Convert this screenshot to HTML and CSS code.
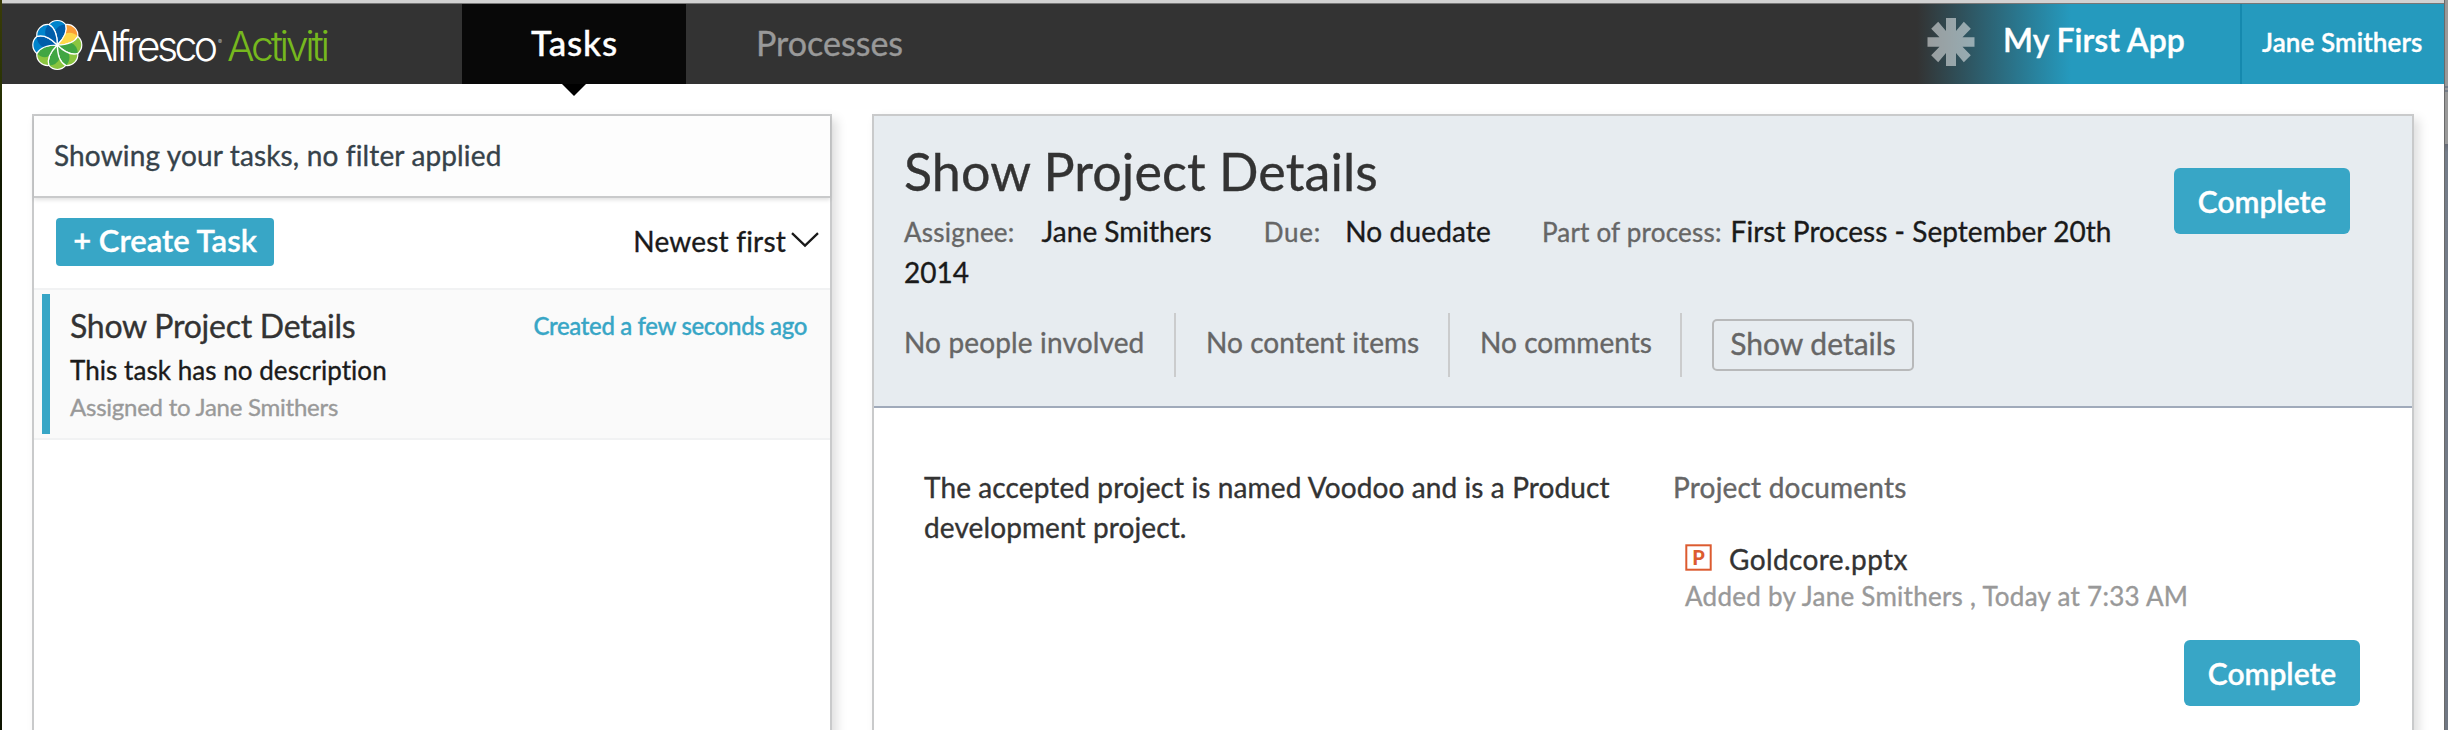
FILE: index.html
```html
<!DOCTYPE html>
<html lang="en">
<head>
<meta charset="utf-8">
<title>Alfresco Activiti - Tasks</title>
<link rel="stylesheet" href="styles.css">
</head>
<body>
<div class="frame">
  <div class="edge-left"></div>
  <div class="window">
    <div class="titlebar"></div>
    <header class="header">
      <svg class="logo" width="430" height="80" viewBox="0 0 430 80" role="img" aria-label="Alfresco Activiti">
        <defs>
          <path id="petal" d="M0 0C0 -8.5 -2.5 -17.3 -8.49 -20.49A11 11 0 0 1 8.49 -20.49C10.5 -14 6 -6 0 0Z"/>
          <path id="shade" d="M0 0A12 12 0 0 1 8.49 -20.49C10.5 -14 6 -6 0 0Z"/>
          <clipPath id="petal-clip"><use href="#petal"/></clipPath>
        </defs>
        <g transform="translate(25.3 41)" stroke-width="1.2">
          <g fill="#0084cc"><use href="#petal"/><use href="#shade" fill="#005daa" clip-path="url(#petal-clip)"/><use href="#petal" class="vein"/></g>
          <g fill="#fa9d35" transform="rotate(45)"><use href="#petal"/><use href="#shade" fill="#fed84a" clip-path="url(#petal-clip)"/><use href="#petal" class="vein"/></g>
          <g fill="#8bc53f" transform="rotate(90)"><use href="#petal"/><use href="#shade" fill="#41a643" clip-path="url(#petal-clip)"/><use href="#petal" class="vein"/></g>
          <g fill="#8bc53f" transform="rotate(135)"><use href="#petal"/><use href="#shade" fill="#41a643" clip-path="url(#petal-clip)"/><use href="#petal" class="vein"/></g>
          <g fill="#8bc53f" transform="rotate(180)"><use href="#petal"/><use href="#shade" fill="#41a643" clip-path="url(#petal-clip)"/><use href="#petal" class="vein"/></g>
          <g fill="#8bc53f" transform="rotate(225)"><use href="#petal"/><use href="#shade" fill="#41a643" clip-path="url(#petal-clip)"/><use href="#petal" class="vein"/></g>
          <g fill="#0084cc" transform="rotate(270)"><use href="#petal"/><use href="#shade" fill="#005daa" clip-path="url(#petal-clip)"/><use href="#petal" class="vein"/></g>
          <g fill="#0084cc" transform="rotate(315)"><use href="#petal"/><use href="#shade" fill="#005daa" clip-path="url(#petal-clip)"/><use href="#petal" class="vein"/></g>
        </g>
        <text class="logo-text" x="54" y="57" textLength="132" fill="#fff">Alfresco</text>
        <text class="logo-reg" x="186" y="40" fill="#bbb">®</text>
        <text class="logo-text" x="195" y="57" textLength="103" fill="#76b81e">Activiti</text>
      </svg>
      <nav class="nav">
        <a class="tab tab-active">Tasks</a>
        <a class="tab tab-processes">Processes</a>
      </nav>
      <div class="app">
        <svg width="48" height="48" viewBox="-24 -24 48 48" fill="#fff" opacity=".5">
          <path d="M-5-24H5V-11L12.8-20.2L19.8-13.2L11.5-4.7H23.5V4.7H11.5L19.8 13.2L12.8 20.2L5 11V24H-5V11L-12.8 20.2L-19.8 13.2L-11.5 4.7H-23.5V-4.7H-11.5L-19.8-13.2L-12.8-20.2L-5-11Z"/>
        </svg>
        <span class="app-name">My First App</span>
      </div>
      <div class="user">Jane Smithers</div>
    </header>

    <main class="content">
      <section class="panel task-list">
        <div class="filter">Showing your tasks, no filter applied</div>
        <div class="toolbar">
          <button class="btn btn-create">+ Create Task</button>
          <div class="sort">Newest first
            <svg width="28" height="16" viewBox="0 0 28 16" fill="none" stroke="#1a1a1a" stroke-width="2.3"><path d="M1 1.2L14 13.6L27 1.2"/></svg>
          </div>
        </div>
        <article class="task">
          <div class="task-bar"></div>
          <div class="task-text">
            <div class="task-head"><span class="task-title">Show Project Details</span><span class="task-created">Created a few seconds ago</span></div>
            <div class="task-desc">This task has no description</div>
            <div class="task-assigned">Assigned to Jane Smithers</div>
          </div>
        </article>
      </section>

      <section class="panel detail">
        <div class="detail-head">
          <div class="detail-info">
            <h1 class="detail-title">Show Project Details</h1>
            <div class="meta"><span class="label assignee">Assignee:</span><span class="assignee-name">Jane Smithers</span><span class="label due">Due:</span><span class="due-value">No duedate</span><span class="label process">Part of process:</span><span class="process-name">First Process - September 20th 2014</span></div>
            <div class="stats">
              <span class="stat stat-people">No people involved</span>
              <span class="stat stat-content">No content items</span>
              <span class="stat stat-comments">No comments</span>
              <button class="btn-details">Show details</button>
            </div>
          </div>
          <button class="btn btn-complete">Complete</button>
        </div>
        <div class="form">
          <p class="form-text">The accepted project is named Voodoo and is a Product development project.</p>
          <div class="docs">
            <div class="docs-label">Project documents</div>
            <div class="doc">
              <div class="doc-name">
                <svg width="27" height="27" viewBox="0 0 27 27"><rect x="1.3" y="1.3" width="24.4" height="24.4" fill="#fff" stroke="#dc5b30" stroke-width="2"/><text class="doc-letter" x="13.5" y="20.6" text-anchor="middle">P</text></svg>
                <span>Goldcore.pptx</span>
              </div>
              <div class="doc-meta">Added by Jane Smithers , Today at 7:33 AM</div>
            </div>
          </div>
        </div>
        <div class="actions"><button class="btn btn-complete">Complete</button></div>
      </section>
    </main>
  </div>
  <div class="edge-right"></div>
</div>
</body>
</html>
```
FILE: styles.css
```css
* { box-sizing: border-box; }
body { margin: 0; font-family: Lato, "Open Sans", sans-serif; font-size: 28px; line-height: 40px; color: #1a1a1a; background: #fff; -webkit-text-stroke: .35px; }
button { font-family: inherit; margin: 0; }

.frame { display: grid; grid-template-columns: 2px 1fr 4px; height: 730px; overflow: hidden; }
.edge-left { background: linear-gradient(#3a3c08, #2a3404 84px, #101800 180px, #161f02 320px, #0c1200); }
.edge-right { border-left: 1px solid #6a6a6a; background: linear-gradient(#999 86px, #757d89 86px, #757d89 88px, #999 88px, #999 90px, #757d89 90px, #757d89 92px, #999 92px, #999 144px, #666b75 144px, #757d89 152px, #6f7682); }
.window { min-width: 0; display: flex; flex-direction: column; }
.titlebar { height: 4px; flex: none; background: #d2d2d2; border-bottom: 1px solid #777; }

.header { display: flex; height: 80px; flex: none; padding-left: 30px; background: #333; }
.logo { flex: none; display: block; -webkit-text-stroke: 0; }
.logo-text { font-family: Inter, "Liberation Sans", sans-serif; font-weight: 300; font-size: 41px; }
.logo-reg { font-family: Inter, sans-serif; font-size: 6px; }
.vein { fill: none; stroke: #fff; }
.nav { display: flex; }
.tab { position: relative; height: 80px; line-height: 77px; font-size: 34px; text-align: center; color: #999; }
.tab-active { width: 224px; background: #080808; color: #fff; font-size: 35px; letter-spacing: .85px; font-weight: 500; padding-left: 1px; }
.tab-active::after { content: ""; position: absolute; left: 100px; top: 80px; border: 12px solid transparent; border-top-color: #000; border-bottom: 0; }
.tab-processes { padding-left: 70px; letter-spacing: 0; }
.app { display: flex; margin-left: auto; width: 331px; padding: 14px 0 0 18px; background: linear-gradient(90deg, #333 8px, #259abe 162px); }
.app-name { margin-left: 28px; margin-top: -14px; line-height: 71px; font-size: 32px; font-weight: 600; color: #fff; white-space: nowrap; }
.user { width: 204px; border-left: 2px solid #1589ae; background: #259abe; padding-left: 20px; line-height: 76px; font-size: 26px; letter-spacing: .1px; font-weight: 600; color: #fff; white-space: nowrap; }

.content { flex: 1; min-height: 0; display: grid; grid-template-columns: 800px 1542px; gap: 40px; padding: 30px 0 0 30px; }
.panel { height: 700px; border: 2px solid #c9cacb; background: #fff; box-shadow: 5px 5px 10px rgba(0, 0, 0, .13); }

.filter { height: 82px; line-height: 79px; padding-left: 20px; border-bottom: 2px solid #c9cacb; background: #fdfdfd; color: #36424a; letter-spacing: .14px; box-shadow: 0 2px 4px rgba(0, 0, 0, .12); }
.toolbar { height: 90px; padding: 20px 11px 0 22px; display: flex; justify-content: space-between; }
.btn { border: 0; background: #38a6c6; color: #fff; padding: 0; text-align: center; }
.btn-create { width: 218px; height: 48px; padding-bottom: 3px; border-radius: 4px; line-height: 45px; font-size: 31px; font-weight: 600; white-space: nowrap; }
.sort { display: flex; align-items: flex-start; gap: 5px; line-height: 47px; letter-spacing: .2px; }
.sort svg { margin-top: 14px; }
.task { height: 152px; border: solid #f1f2f3; border-width: 2px 0; background: #fafafa; display: flex; padding: 4px 0 4px 8px; }
.task-bar { width: 8px; background: #38a6c6; }
.task-text { flex: 1; padding: 10px 23px 0 20px; }
.task-head { display: flex; justify-content: space-between; height: 44px; }
.task-title { font-size: 32px; line-height: 44px; letter-spacing: -.25px; color: #333; }
.task-created { font-size: 24px; line-height: 43px; letter-spacing: -.35px; color: #38a6c6; font-weight: 500; }
.task-desc { font-size: 26px; line-height: 44px; letter-spacing: .05px; }
.task-assigned { font-size: 24px; line-height: 30px; letter-spacing: -.25px; color: #999; }

.detail-head { display: flex; justify-content: space-between; height: 292px; padding: 23px 62px 0 30px; background: #e7ecf0; border-bottom: 2px solid #a0aaba; }
.detail-title { margin: 0 0 8px; font-weight: 400; font-size: 52px; line-height: 64px; letter-spacing: .1px; color: #333; }
.meta { width: 1240px; }
.label { font-size: 26px; color: #666; }
.assignee { letter-spacing: .25px; }
.assignee-name { margin-left: 27px; }
.due { margin-left: 52px; letter-spacing: .8px; }
.due-value { margin-left: 24px; letter-spacing: .15px; }
.process { margin-left: 51px; letter-spacing: .2px; }
.process-name { margin-left: 9px; letter-spacing: .05px; }
.stats { display: flex; margin-top: 21px; color: #666; }
.stat { height: 64px; line-height: 58px; border-right: 2px solid #cbcccd; padding-left: 30px; letter-spacing: .05px; }
.stat-people { width: 272px; padding-left: 0; letter-spacing: .15px; }
.stat-content { width: 274px; }
.stat-comments { width: 232px; }
.btn-details { width: 202px; height: 52px; margin: 6px 0 0 30px; padding: 0 0 3px; border: 2px solid #b8b9ba; border-radius: 5px; background: transparent; color: #666; font-size: 30px; line-height: 45px; }
.btn-complete { width: 176px; height: 66px; border-radius: 6px; font-size: 30px; line-height: 66px; font-weight: 600; }
.detail-head .btn-complete { margin-top: 29px; }

.form { display: grid; grid-template-columns: 749px 1fr; height: 232px; padding: 59px 0 0 50px; }
.form-text { margin: 0; width: 704px; letter-spacing: .11px; color: #333; }
.docs-label { color: #666; letter-spacing: .2px; }
.doc { margin: 32px 0 0 12px; }
.doc-name { display: flex; gap: 17px; letter-spacing: .4px; color: #333; }
.doc-name svg { margin-top: 5px; }
.doc-letter { font-family: Lato, sans-serif; font-weight: 900; font-size: 20px; fill: #dc5b30; letter-spacing: 0; -webkit-text-stroke: 0; }
.doc-meta { font-size: 26px; line-height: 34px; letter-spacing: .27px; color: #999; }
.actions { display: flex; justify-content: flex-end; padding-right: 52px; }
```
